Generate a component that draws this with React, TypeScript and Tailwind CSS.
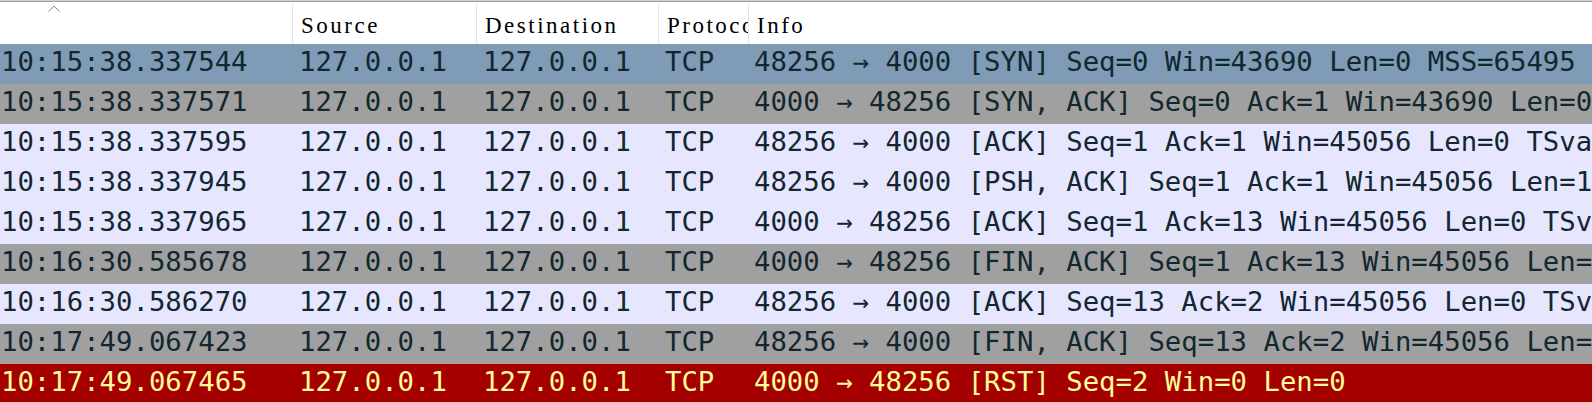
const cols = "grid grid-cols-[292px_184px_182px_90px_1fr]";

type Row = { time: string; info: string; bg: string; fg: string };

const rows: Row[] = [
  { time: "10:15:38.337544", info: "48256 → 4000 [SYN] Seq=0 Win=43690 Len=0 MSS=65495", bg: "bg-[#7f9bb5]", fg: "text-[#12272e]" },
  { time: "10:15:38.337571", info: "4000 → 48256 [SYN, ACK] Seq=0 Ack=1 Win=43690 Len=0 MSS=65495 SACK_PERM=1", bg: "bg-[#a0a0a0]", fg: "text-[#12272e]" },
  { time: "10:15:38.337595", info: "48256 → 4000 [ACK] Seq=1 Ack=1 Win=45056 Len=0 TSval=1017218 TSecr=1017218", bg: "bg-[#e7e6ff]", fg: "text-[#12272e]" },
  { time: "10:15:38.337945", info: "48256 → 4000 [PSH, ACK] Seq=1 Ack=1 Win=45056 Len=12 TSval=1017218", bg: "bg-[#e7e6ff]", fg: "text-[#12272e]" },
  { time: "10:15:38.337965", info: "4000 → 48256 [ACK] Seq=1 Ack=13 Win=45056 Len=0 TSval=1017218 TSecr=1017218", bg: "bg-[#e7e6ff]", fg: "text-[#12272e]" },
  { time: "10:16:30.585678", info: "4000 → 48256 [FIN, ACK] Seq=1 Ack=13 Win=45056 Len=0 TSval=1030280", bg: "bg-[#a0a0a0]", fg: "text-[#12272e]" },
  { time: "10:16:30.586270", info: "48256 → 4000 [ACK] Seq=13 Ack=2 Win=45056 Len=0 TSval=1030280 TSecr=1030280", bg: "bg-[#e7e6ff]", fg: "text-[#12272e]" },
  { time: "10:17:49.067423", info: "48256 → 4000 [FIN, ACK] Seq=13 Ack=2 Win=45056 Len=0 TSval=1049900", bg: "bg-[#a0a0a0]", fg: "text-[#12272e]" },
  { time: "10:17:49.067465", info: "4000 → 48256 [RST] Seq=2 Win=0 Len=0", bg: "bg-[#a40000]", fg: "text-[#fffc9c]" },
];

function HeaderCell({ label }: { label: string }) {
  return (
    <div className="h-[40px] overflow-hidden whitespace-nowrap pl-[8px] leading-[44px] border-l border-[#e5e5e5]">
      {label}
    </div>
  );
}

export default function App() {
  return (
    <div className="w-[1592px] h-[402px] overflow-hidden bg-white">
      <div className="h-[1px] bg-[#d0d0d0]" />
      <div className="h-[1px] bg-[#a0a0a0]" />

      {/* header */}
      <div
        className={cols + " h-[42px] pt-[2px] bg-white text-black text-[23px] tracking-[2.5px]"}
        style={{ fontFamily: '"Liberation Serif", serif' }}
      >
        <div className="relative h-[40px]">
          <svg className="absolute left-[48px] top-[1px]" width="12" height="7" viewBox="0 0 12 7">
            <polyline points="0.5,6.5 6,1 11.5,6.5" fill="none" stroke="#8c8c8c" strokeWidth="1" />
          </svg>
        </div>
        <HeaderCell label="Source" />
        <HeaderCell label="Destination" />
        <HeaderCell label="Protocol" />
        <HeaderCell label="Info" />
      </div>

      {/* packet rows */}
      <div style={{ fontFamily: '"DejaVu Sans Mono", monospace' }} className="text-[27.3px]">
        {rows.map((r) => (
          <div key={r.time} className={cols + " h-[40px] leading-[35px] " + r.bg + " " + r.fg}>
            <div className="overflow-hidden whitespace-nowrap pl-[1px]">{r.time}</div>
            <div className="overflow-hidden whitespace-nowrap pl-[7px]">127.0.0.1</div>
            <div className="overflow-hidden whitespace-nowrap pl-[7px]">127.0.0.1</div>
            <div className="overflow-hidden whitespace-nowrap pl-[7px]">TCP</div>
            <div className="overflow-hidden whitespace-nowrap pl-[6px]">{r.info}</div>
          </div>
        ))}
      </div>
    </div>
  );
}
